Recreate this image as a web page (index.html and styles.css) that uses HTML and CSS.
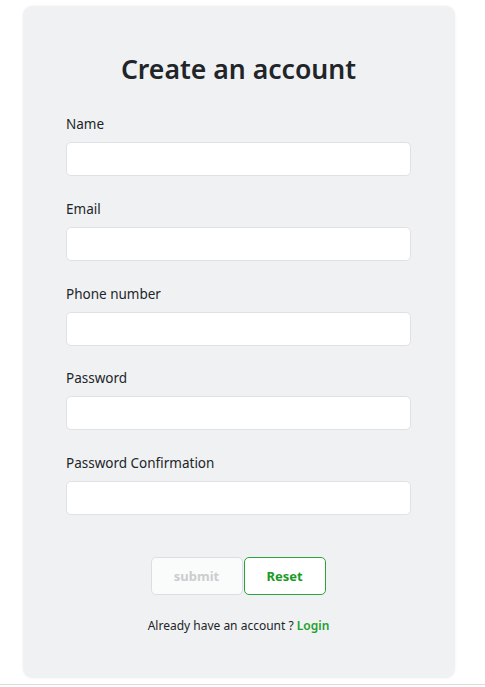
FILE: index.html
```html
<!DOCTYPE html>
<html lang="en">
<head>
<meta charset="utf-8">
<title>Create an account</title>
<link rel="stylesheet" href="styles.css">
</head>
<body>
<main class="card">
  <h1 class="title">Create an account</h1>
  <form class="form">
    <div class="field">
      <label class="label" for="name">Name</label>
      <input class="input" id="name" type="text">
    </div>
    <div class="field">
      <label class="label" for="email">Email</label>
      <input class="input" id="email" type="email">
    </div>
    <div class="field">
      <label class="label" for="phone">Phone number</label>
      <input class="input" id="phone" type="tel">
    </div>
    <div class="field">
      <label class="label" for="password">Password</label>
      <input class="input" id="password" type="password">
    </div>
    <div class="field">
      <label class="label" for="confirm">Password Confirmation</label>
      <input class="input" id="confirm" type="password">
    </div>
    <div class="actions">
      <button class="btn btn-submit" type="submit" disabled>submit</button>
      <button class="btn btn-reset" type="reset">Reset</button>
    </div>
    <p class="login">Already have an account ? <a class="login-link" href="#">Login</a></p>
  </form>
</main>
<div class="footer-line"></div>
</body>
</html>
```

FILE: styles.css
```css
* { box-sizing: border-box; }
html, body { margin: 0; padding: 0; background: #ffffff; }
body {
  font-family: "Noto Sans", "Open Sans", sans-serif;
  color: #212529;
}
.card {
  margin: 6px 0 0 23px;
  width: 432px;
  height: 672px;
  background: #f0f1f2;
  border-radius: 9px;
  box-shadow: 0 0 3px rgba(0,0,0,0.06);
  padding: 46px 44px 0 43px;
}
.title {
  margin: 0;
  text-align: center;
  font-size: 26.6px;
  line-height: 34px;
  font-weight: 600;
  color: #212529;
}
.form {
  margin-top: 28px;
  display: flex;
  flex-direction: column;
  gap: 22.8px;
}
.field {
  display: flex;
  flex-direction: column;
  gap: 7px;
}
.label {
  font-size: 13.5px;
  line-height: 21px;
  height: 21px;
  color: #212529;
}
.input {
  height: 34px;
  width: 345px;
  border: 1px solid #dee2e6;
  border-radius: 5px;
  background: #ffffff;
  padding: 4px 10px;
  font: inherit;
}
.actions {
  margin-top: 19px;
  display: flex;
  justify-content: center;
  gap: 1px;
}
.btn {
  height: 38px;
  border-radius: 5px;
  background: #ffffff;
  font-family: "Noto Sans", sans-serif;
  font-size: 13px;
  font-weight: 700;
  padding: 0;
}
.btn-submit {
  width: 92px;
  border: 1px solid #dcdfe2;
  color: #cbcdcf;
  background: #fafbfb;
  margin-left: -1px;
}
.btn-reset {
  width: 82px;
  border: 1px solid #2aa43a;
  color: #1a9a25;
}
.login {
  margin: -2px 0 0;
  text-align: center;
  font-size: 12px;
  line-height: 20px;
  color: #212529;
}
.login-link {
  color: #22a12e;
  font-weight: 600;
  text-decoration: none;
}
.footer-line {
  margin-top: 6px;
  border-top: 1px solid #dcdcdc;
}
```
